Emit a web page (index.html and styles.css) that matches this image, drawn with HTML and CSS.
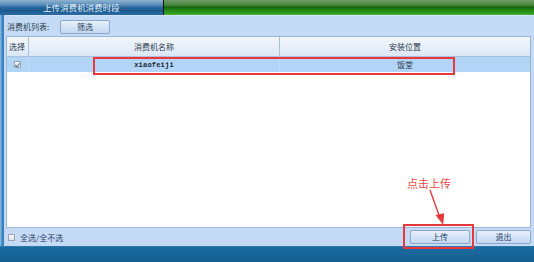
FILE: index.html
```html
<!DOCTYPE html>
<html>
<head>
<meta charset="utf-8">
<link rel="stylesheet" href="styles.css">
</head>
<body>
<div class="page">
  <div class="titlebar">
    <div class="tab">上传消费机消费时段</div>
    <div class="green"></div>
  </div>
  <div class="main">
    <div class="leftbar"></div>
    <div class="content">
      <div class="toolbar">
        <span class="label">消费机列表:</span>
        <button class="btn filter">筛选</button>
      </div>
      <div class="grid">
        <div class="row head">
          <div class="cell c1">选择</div>
          <div class="cell c2">消费机名称</div>
          <div class="cell c3">安装位置</div>
        </div>
        <div class="row sel">
          <div class="cell c1"><span class="chk checked"></span></div>
          <div class="cell c2 mono">xiaofeiji</div>
          <div class="cell c3">饭堂</div>
        </div>
        <div class="body"></div>
      </div>
      <div class="bottombar">
        <span class="chk"></span>
        <span class="all">全选/全不选</span>
        <div class="spacer"></div>
        <button class="btn upload">上传</button>
        <button class="btn quit">退出</button>
      </div>
    </div>
  </div>
  <div class="footer"></div>

  <div class="mark mark-row"></div>
  <div class="mark mark-btn"></div>
  <div class="note">点击上传</div>
  <svg class="arrow" width="30" height="40" viewBox="0 0 30 40">
    <line x1="4" y1="2" x2="14" y2="30" stroke="#e53a3a" stroke-width="1.4"/>
    <polygon points="10,26 19,26 16,37" fill="#e53a3a" transform="rotate(-10 15 30)"/>
  </svg>
</div>
</body>
</html>
```
FILE: styles.css
```css
* { box-sizing: border-box; }
html, body { margin: 0; padding: 0; }
body {
  width: 534px;
  height: 262px;
  overflow: hidden;
  font-family: "Noto Sans CJK SC", "Noto Sans", sans-serif;
  font-size: 8px;
  color: #2a3a50;
}
.page {
  position: relative;
  width: 534px;
  height: 262px;
  display: flex;
  flex-direction: column;
}
.titlebar {
  height: 15px;
  display: flex;
}
.tab {
  width: 164px;
  border-right: 1px solid #0b1a12;
  background: linear-gradient(#90b3d0 0%, #5d8fbb 30%, #2a679c 50%, #1c5b8f 70%, #2a6ba2 100%);
  color: #e4eef7;
  font-size: 8.3px;
  line-height: 15px;
  text-align: center;
  letter-spacing: 0.2px;
}
.green {
  flex: 1;
  background: linear-gradient(#6f9b67 0%, #4f8746 30%, #17660b 48%, #248d17 72%, #33a023 92%, #5bb34c 100%);
}
.main {
  flex: 1;
  display: flex;
  min-height: 0;
}
.leftbar {
  width: 4px;
  background: linear-gradient(90deg, #7fb3dd 0 1px, #5a9bd2 1px 2px, #3a7fbe 2px 4px);
}
.content {
  flex: 1;
  background: #c5dbf5;
  display: flex;
  flex-direction: column;
  padding: 0 3px 0 2px;
}
.toolbar {
  height: 21px;
  display: flex;
  align-items: center;
  padding-left: 1px;
  border-top: 1px solid #d3e4f8;
}
.label {
  width: 53px;
  color: #2d3b4d;
}
.btn {
  font-family: "Noto Sans CJK SC", "Noto Sans", sans-serif;
  font-size: 8px;
  color: #1f3b66;
  border: 1px solid #8ba7cb;
  border-radius: 2px;
  background: linear-gradient(#e9f1fb, #d3e3f6 50%, #c4d8f1);
  padding: 0;
  line-height: 12px;
  height: 14px;
}
.filter {
  width: 50px;
  margin-top: 1px;
}
.grid {
  height: 192px;
  border: 1px solid #9db6d6;
  background: #fff;
  display: flex;
  flex-direction: column;
}
.row {
  display: grid;
  grid-template-columns: 22px 251px 1fr;
}
.row.head {
  height: 20px;
  background: linear-gradient(#f1f6fd, #e6eef9 60%, #dbe7f6);
  border-bottom: 1px solid #a9c0de;
}
.head .cell {
  border-right: 1px solid #a9c0de;
}
.head .cell:last-child { border-right: none; }
.cell {
  display: flex;
  align-items: center;
  justify-content: center;
  color: #2d3b4d;
}
.head .c1 { justify-content: flex-start; padding-left: 2px; }
.row.sel {
  height: 15px;
  background: #b2d4f7;
}
.sel .cell { border-right: 1px solid #c3ddf7; }
.sel .cell:last-child { border-right: none; }
.mono {
  font-family: "Liberation Mono", monospace;
  font-size: 7px;
  font-weight: bold;
  letter-spacing: 0.2px;
  color: #1c2530;
}
.chk {
  display: inline-block;
  width: 7px;
  height: 7px;
  border: 1px solid #9aa6b4;
  background: linear-gradient(#f4f6f8, #dfe4ea);
  position: relative;
}
.chk.checked::after {
  content: "";
  position: absolute;
  left: 1px;
  top: 0px;
  width: 2px;
  height: 4px;
  border-right: 1px solid #5a6f8a;
  border-bottom: 1px solid #5a6f8a;
  transform: rotate(40deg);
}
.sel .c1 .chk { margin-left: 0; }
.body { flex: 1; }
.bottombar {
  flex: 1;
  display: flex;
  align-items: center;
  padding-left: 2px;
}
.all {
  margin-left: 5px;
  color: #2b3f66;
}
.spacer { flex: 1; }
.upload {
  width: 60px;
  margin-right: 6px;
  margin-top: -1px;
}
.quit {
  width: 55px;
  margin-top: -1px;
}
.footer {
  height: 16px;
  background: linear-gradient(#3c86b7 0, #1b6a9d 1px, #186498 60%, #155d8f);
}
.mark {
  position: absolute;
  border: 2px solid #e8383c;
}
.mark-row {
  left: 93px;
  top: 57px;
  width: 362px;
  height: 18px;
}
.mark-btn {
  left: 403px;
  top: 224px;
  width: 71px;
  height: 25px;
}
.note {
  position: absolute;
  left: 407px;
  top: 176px;
  font-size: 11px;
  line-height: 14px;
  color: #ee4a4a;
}
.arrow {
  position: absolute;
  left: 426px;
  top: 188px;
}
```
